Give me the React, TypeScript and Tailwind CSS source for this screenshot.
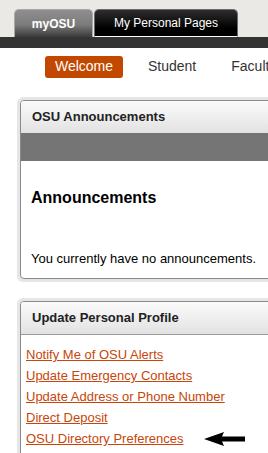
import React from 'react';

const links = [
  'Notify Me of OSU Alerts',
  'Update Emergency Contacts',
  'Update Address or Phone Number',
  'Direct Deposit',
  'OSU Directory Preferences',
];

const Arrow = () => (
  <svg width="41" height="14" viewBox="0 0 41 14" className="ml-[20px] shrink-0">
    <polygon points="0,7 20,0 18,4.5 41,4.5 41,9.5 18,9.5 20,14" fill="#000" />
  </svg>
);

export default function App() {
  return (
    <div
      className="w-[268px] h-[453px] overflow-hidden bg-white"
      style={{ fontFamily: '"Liberation Sans", Arial, sans-serif' }}
    >
      {/* Tabs */}
      <div className="h-[37px] bg-[#ebe9e6] flex items-end pl-[14px]">
        <div className="shrink-0 w-[79px] h-[28px] rounded-t-[5px] bg-[linear-gradient(#8f8f8f,#7b7b7b_55%,#3a3a3a)] border border-b-0 border-[#a9a9a9] flex items-center justify-center text-white text-[12px] font-bold">
          myOSU
        </div>
        <div className="shrink-0 ml-[1px] w-[144px] h-[28px] rounded-t-[5px] bg-[linear-gradient(#2e2e2e,#000_70%)] border border-[#6a6a6a] border-b-white flex items-center justify-center text-white text-[12px]">
          My Personal Pages
        </div>
      </div>
      <div className="h-[11px] bg-[#333333]" />

      {/* Nav */}
      <div className="flex items-center h-[27px] mt-[5px] pl-[45px] text-[14px] text-[#333] whitespace-nowrap">
        <div className="shrink-0 w-[78px] h-[22px] rounded-[3px] bg-[#c24800] text-white flex items-center justify-center">
          Welcome
        </div>
        <span className="shrink-0 ml-[25px]">Student</span>
        <span className="shrink-0 ml-[35px]">Faculty</span>
      </div>

      {/* Announcements panel */}
      <div className="ml-[17px] mt-[17px] w-[300px] p-[3px] pr-0 bg-[#e6e6e6] rounded-[6px]">
        <div className="border border-[#8a8a8a] rounded-[4px] bg-white overflow-hidden">
          <div className="h-[32px] bg-[linear-gradient(#fbfbfb,#e2e2e2)] flex items-center pl-[11px] text-[13px] font-bold text-[#222]">
            OSU Announcements
          </div>
          <div className="h-[28px] bg-[#757575]" />
          <div className="pl-[10px] pt-[27px] pb-[11px]">
            <div className="text-[16px] font-bold text-black leading-[20px]">Announcements</div>
            <div className="mt-[43px] text-[13px] text-black leading-[16px]">
              You currently have no announcements.
            </div>
          </div>
        </div>
      </div>

      {/* Profile panel */}
      <div className="ml-[17px] mt-[16px] w-[300px] p-[3px] pr-0 bg-[#e6e6e6] rounded-[6px]">
        <div className="border border-[#8a8a8a] rounded-[4px] bg-white overflow-hidden">
          <div className="h-[33px] bg-[linear-gradient(#fbfbfb,#e2e2e2)] border-b border-[#9a9a9a] flex items-center pl-[11px] text-[13px] font-bold text-[#222]">
            Update Personal Profile
          </div>
          <div className="pl-[5px] pt-[9px] pb-[20px] text-[13px] leading-[21px]">
            {links.map((l, i) => (
              <div key={i} className="flex items-center">
                <a href="#" className="text-[#c8460a] underline">
                  {l}
                </a>
                {i === links.length - 1 && <Arrow />}
              </div>
            ))}
          </div>
        </div>
      </div>
    </div>
  );
}
